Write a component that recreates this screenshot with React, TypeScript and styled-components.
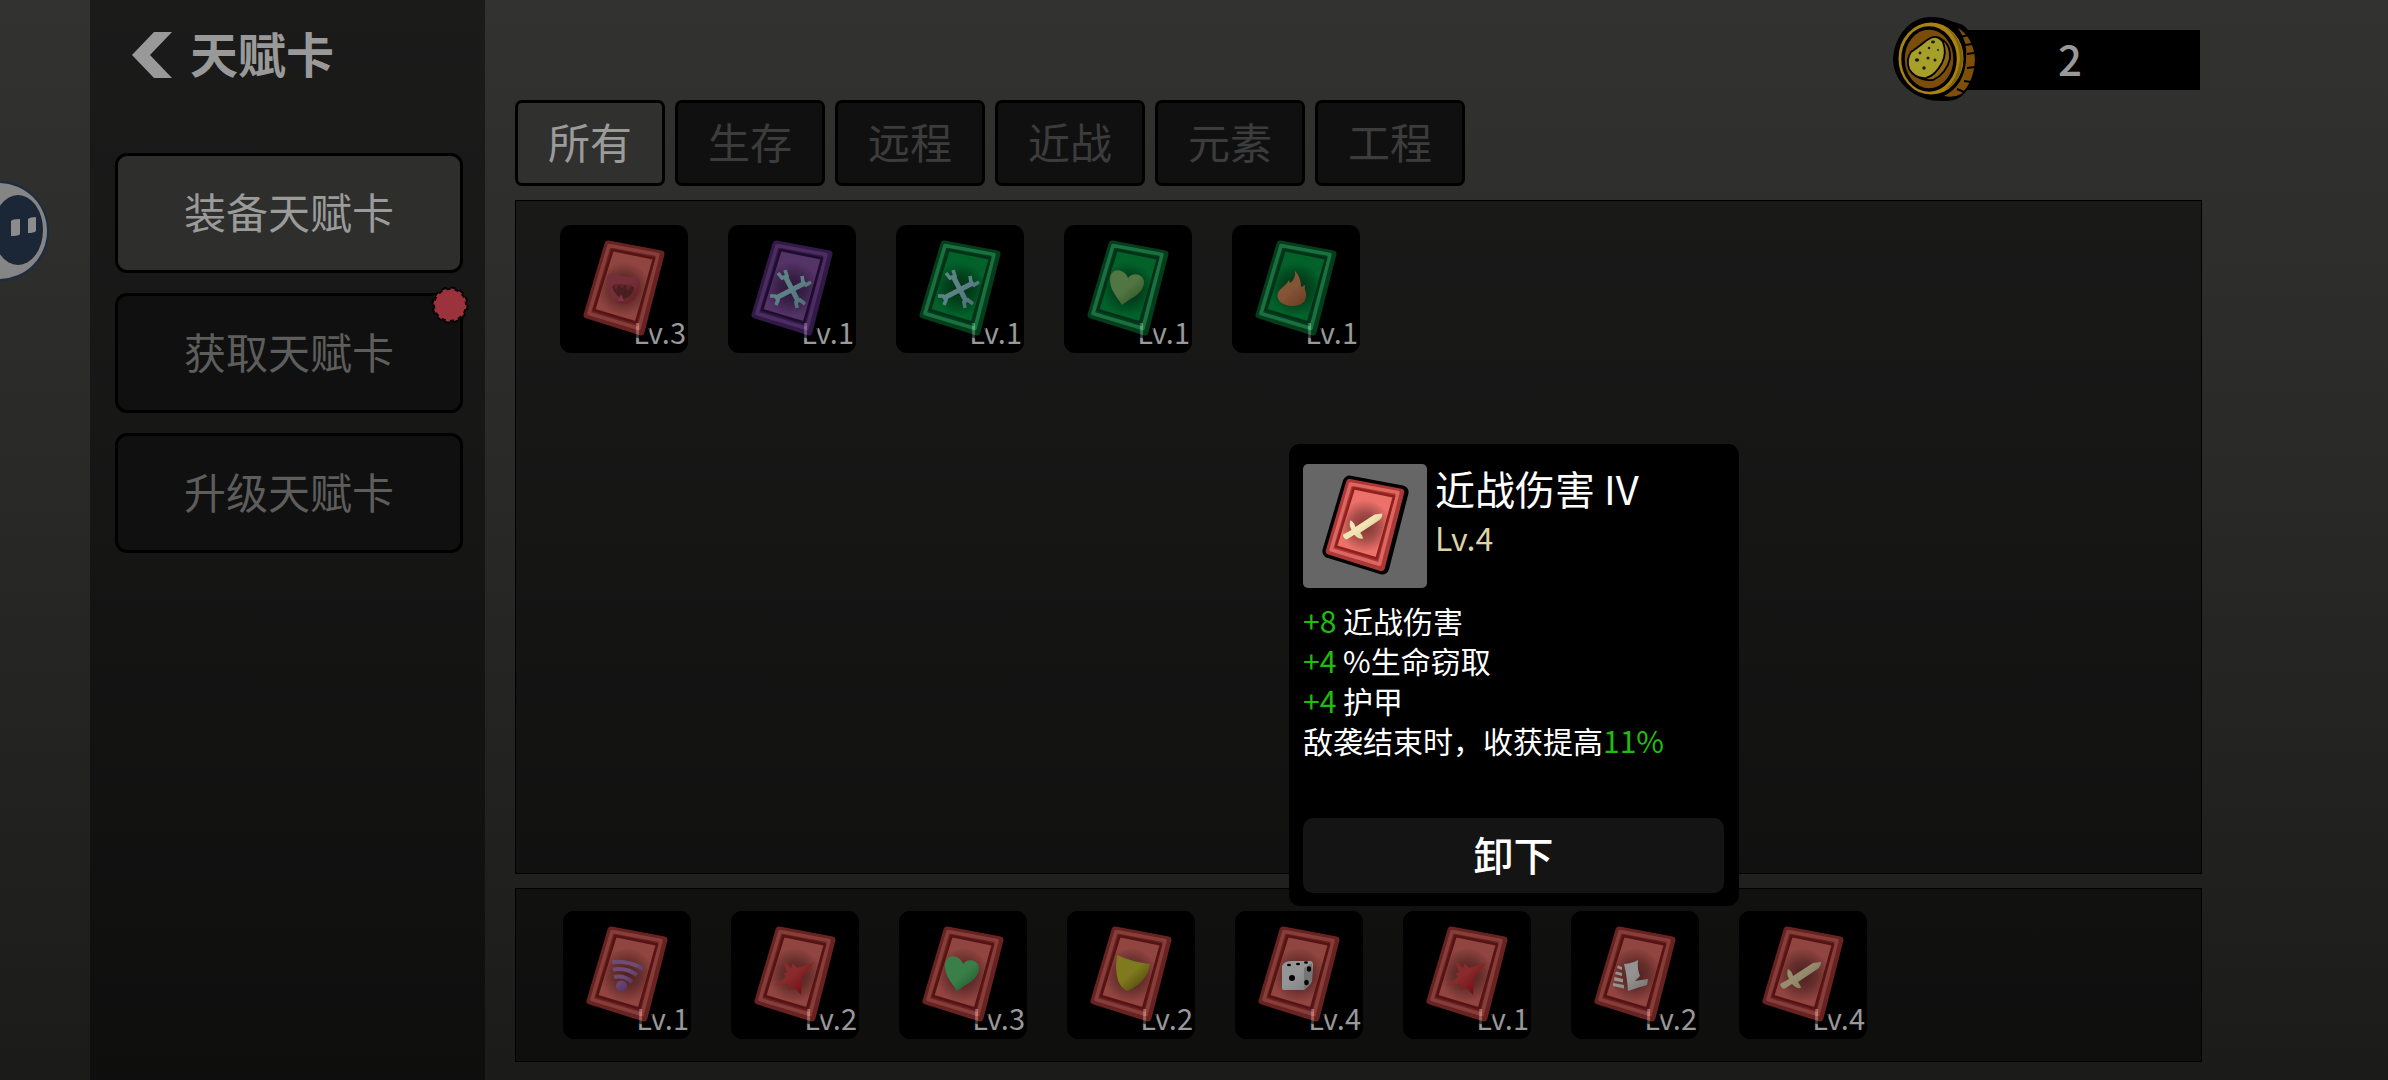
import React, { useId, useState } from "react";
import styled, { createGlobalStyle } from "styled-components";

const GlobalStyle = createGlobalStyle`
  * { box-sizing: border-box; }
  body {
    margin: 0;
    background: #1c1c1b;
    color: #999999;
    font-family: "Noto Sans CJK SC", "Noto Sans", sans-serif;
  }
  button { font: inherit; color: inherit; cursor: pointer; }
`;

const Page = styled.div`
  position: relative;
  display: flex;
  min-height: 100vh;
  padding: 0 186px 0 90px;
  overflow: hidden;
  background: linear-gradient(#323231, #2a2a29 40%, #1b1b1a);
`;

const FloatingHelper = styled.button`
  position: absolute;
  left: 0;
  top: 180px;
  width: 50px;
  height: 102px;
  padding: 0;
  border: 0;
  background: none;
`;

const Sidebar = styled.aside`
  flex: 0 0 395px;
  padding: 20px 22px 0 25px;
  background: rgba(0, 0, 0, 0.45);
`;

const BackButton = styled.button`
  display: flex;
  align-items: center;
  gap: 18px;
  height: 70px;
  margin: 0 0 63px;
  padding: 0 17px;
  border: 0;
  background: none;
`;

const Title = styled.h1`
  margin: 0;
  padding-bottom: 6px;
  font-size: 48px;
  line-height: 64px;
  font-weight: 700;
`;

const Nav = styled.nav`
  display: flex;
  flex-direction: column;
  gap: 20px;
`;

const NavButton = styled.button<{ $active: boolean }>`
  position: relative;
  height: 120px;
  padding: 0 0 4px;
  border: 3px solid #000;
  border-radius: 12px;
  background: ${(p) => (p.$active ? "#2e2e2d" : "#101010")};
  color: ${(p) => (p.$active ? "#9b9b9b" : "#5d5d5c")};
  font-size: 42px;
  line-height: 60px;
`;

const NoticeDot = styled.svg`
  position: absolute;
  top: -11px;
  right: -10px;
  width: 40px;
  height: 40px;
`;

const Main = styled.main`
  display: flex;
  flex: 1;
  flex-direction: column;
  min-width: 0;
  padding: 17px 0 18px 30px;
`;

const Header = styled.header`
  display: flex;
  justify-content: flex-end;
  height: 83px;
`;

const Currency = styled.div`
  display: flex;
  align-items: flex-start;
`;

const CoinHolder = styled.div`
  z-index: 1;
  display: flex;
  margin-right: -36px;
`;

const Amount = styled.output`
  width: 260px;
  height: 60px;
  margin: 13px 2px 0 0;
  background: #000;
  font-size: 42px;
  line-height: 56px;
  font-weight: 500;
  text-align: center;
`;

const Tabs = styled.div`
  display: flex;
  gap: 10px;
  margin-bottom: 14px;
`;

const Tab = styled.button<{ $active: boolean }>`
  width: 150px;
  height: 86px;
  padding: 0 0 4px;
  border: 3px solid #000;
  border-radius: 7px;
  background: ${(p) => (p.$active ? "#30302f" : "#101010")};
  color: ${(p) => (p.$active ? "#9b9b9b" : "#3c3c3c")};
  font-size: 42px;
  line-height: 60px;
`;

const Panel = styled.section<{ $grow?: boolean }>`
  display: flex;
  flex: ${(p) => (p.$grow ? "1" : "0 0 auto")};
  align-items: flex-start;
  gap: 40px;
  padding: ${(p) => (p.$grow ? "24px 44px" : "22px 47px")};
  border: 1px solid #000;
  background: rgba(0, 0, 0, 0.45);

  & + & { margin-top: 14px; }
`;

const Slot = styled.div`
  position: relative;
`;

const Tile = styled.button`
  display: grid;
  width: 128px;
  height: 128px;
  padding: 0;
  border: 0;
  border-radius: 11px;
  background: #000;

  & > * { grid-area: 1 / 1; }
`;

const Level = styled.span`
  place-self: end;
  padding: 0 2px 2px;
  font-size: 29px;
  line-height: 40px;
`;

const Art = styled.svg<{ $dim?: boolean }>`
  display: block;
  width: 100%;
  height: 100%;
  opacity: ${(p) => (p.$dim ? 0.61 : 1)};
`;

const Popup = styled.article`
  position: absolute;
  right: 100%;
  bottom: calc(100% + 5px);
  display: flex;
  flex-direction: column;
  width: 450px;
  padding: 20px 15px 13px 14px;
  border-radius: 11px;
  background: #000;
  color: #fff;
`;

const PopupHead = styled.div`
  display: flex;
  gap: 8px;
`;

const Portrait = styled.div`
  width: 124px;
  height: 124px;
  border-radius: 5px;
  background: #666;
`;

const PopupTitle = styled.h2`
  margin: 0;
  font-size: 40px;
  line-height: 48px;
  font-weight: 400;
`;

const PopupLevel = styled.p`
  margin: 0;
  color: #ddd4a6;
  font-size: 32px;
  line-height: 50px;
`;

const Stats = styled.ul`
  margin: 12px 0 58px;
  padding: 0;
  list-style: none;
  font-size: 30px;
  line-height: 40px;
  white-space: nowrap;
`;

const Gain = styled.span`
  color: #1fbe0c;
`;

const RemoveButton = styled.button`
  height: 75px;
  padding: 0 0 4px;
  border: 0;
  border-radius: 10px;
  background: #141414;
  font-size: 40px;
  line-height: 60px;
  font-weight: 500;
`;

type Tone = "red" | "purple" | "green";
type Glyph = "fangs" | "wrench" | "heart" | "leafHeart" | "flame" | "wifi" | "burst" | "shield" | "dice" | "boot" | "sword";

const tones: Record<Tone, { edge: string; rim: string; line: string; face: string; core: string }> = {
  red: { edge: "#ab3836", rim: "#dc6660", line: "#8e1f1c", face: "#ec716a", core: "#6b2c2a" },
  purple: { edge: "#512a76", rim: "#7c4a9f", line: "#32144e", face: "#8a54a8", core: "#3b1c4e" },
  green: { edge: "#07652f", rim: "#2bb868", line: "#045126", face: "#04a045", core: "#04401c" },
};

function GlyphArt({ name, id }: { name: Glyph; id: string }) {
  const fill = `url(#${id}g)`;
  switch (name) {
    case "fangs":
      return (
        <g>
          <path d="M47 53 Q49 46 56 49 Q64 53 72 52 Q81 52 80 60 Q79 72 71 77 Q62 82 56 77 Q47 70 47 53Z" fill={fill} />
          <path d="M52 61 Q60 57 74 62 Q73 71 64 74 Q55 72 52 61Z" fill="#5c2a28" opacity="0.7" />
          <path d="M53 59 l3 7 l3 -7 l3 5 l3 -5 l3 7 l4 -6z" fill="#a83a48" />
          <path d="M58 76 l3 -7 l3 7z" fill="#d0586a" />
        </g>
      );
    case "wrench":
      return (
        <g stroke={fill} fill="none" strokeWidth="5">
          <path d="M57 51 L70 76" />
          <path d="M77 58 L48 73" />
          <path d="M50 48 L54 53 L59 51 L57 45" strokeWidth="3.6" />
          <path d="M69 83 L68 77 L72 75 L77 79" strokeWidth="3.6" />
          <path d="M74 51 L75 57 L78 60 L83 57" strokeWidth="3.6" />
          <path d="M42 71 L47 71 L50 75 L48 80" strokeWidth="3.6" />
        </g>
      );
    case "heart":
    case "leafHeart":
      return <path d="M58 80 C53 72 46 65 46 55 C46 47 51 44 56 45.5 C61 47 63 50 64 53 C66 50 71 48 75 50 C80 52 81 57 79 62 C76 70 67 73 58 80Z" fill={fill} />;
    case "flame":
      return <path d="M63 46 C67 50 69 56 69 62 L73 60 Q72 64 74 68 C75 76 70 81 61 81 C51 81 45 76 45.500 70 C46 64 53 62 57 55 L58 58 Q64 54 63 46Z" fill={fill} />;
    case "wifi":
      return (
        <g stroke={fill} fill="none" strokeWidth="4">
          <circle cx="58.500" cy="75" r="5.500" fill={fill} stroke="none" />
          <path d="M51 66 Q61 64 69 71" />
          <path d="M50 58.500 Q63 56 74 64" />
          <path d="M49 51 Q66 49 80 58" />
        </g>
      );
    case "burst":
      return <path d="M51 48 L60 57 L62 52 L66 57 L83 52 L73 64 L71 67 L70 84 L62 75 L58 80 L57 73 L44 74 L55 66 L53 63 L56 61Z" fill={fill} />;
    case "shield":
      return <path d="M50 44 Q65 51 83 53 Q80 72 60 80 Q46 73 50 44Z" fill={fill} />;
    case "dice":
      return (
        <g>
          <path d="M47 55 Q49 50 57 50 L75 50 Q78 50 78 54 L77 70 Q76 73 69 79 L49 79 Q47 79 47 77Z" fill={fill} />
          <path d="M69 57 L77 52 L77 70 L69 78Z" fill="#c0c0c0" />
          <g fill="#000">
            <circle cx="57" cy="67" r="3" />
            <ellipse cx="74" cy="58" rx="2.200" ry="2.700" />
            <ellipse cx="71.500" cy="71.500" rx="2.200" ry="2.700" />
            <ellipse cx="54" cy="54" rx="2" ry="1.200" />
            <ellipse cx="63" cy="53" rx="2" ry="1.200" />
            <ellipse cx="71" cy="51.500" rx="2" ry="1.200" />
          </g>
        </g>
      );
    case "boot":
      return (
        <g fill={fill}>
          <path d="M53 53 Q62 52 67 49 Q66 58 69 65 L64 70 L77 68 L76 74 Q68 76 57 80 Q56 65 53 53Z" />
          <path d="M47 54.500 L51 56 V59 L46 57Z M45 60.500 L51 62 V65 L44 63Z M43.500 66 L52 68 V71.500 L43 69.500Z M42 72 L53 74 V77.500 L42 75Z" />
        </g>
      );
    case "sword":
      return <path d="M82 51 Q82 56 77 59 L59 71 Q62 75 62 77 Q57 78 53 73 L45 78 Q42 77 41 73 L50 68 Q47 62 49 58 Q53 60 54 65 L74 52Z" fill={fill} />;
  }
}

const glyphColours: Record<Glyph, [string, string]> = {
  fangs: ["#bf4e5c", "#a03440"],
  wrench: ["#98d4dc", "#82b8c4"],
  heart: ["#60d078", "#359a4c"],
  leafHeart: ["#86c070", "#4f8a3a"],
  flame: ["#d68a58", "#b45f38"],
  wifi: ["#b47cc0", "#7044a0"],
  burst: ["#e0464a", "#c0161e"],
  shield: ["#d2c834", "#837812"],
  dice: ["#f4f4f4", "#d0d0d0"],
  boot: ["#f2f0ee", "#c6c2c0"],
  sword: ["#f2e6b4", "#cdbd84"],
};

function CardArt({ tone, glyph, dim, label }: { tone: Tone; glyph: Glyph; dim?: boolean; label: string }) {
  const id = useId().replace(/[^a-zA-Z0-9]/g, "");
  const c = tones[tone];
  const [from, to] = glyphColours[glyph];
  return (
    <Art viewBox="0 0 128 128" $dim={dim} role="img" aria-label={label}>
      <defs>
        <radialGradient id={`${id}c`} gradientUnits="userSpaceOnUse" cx="64" cy="64" r="27">
          <stop offset="0" stopColor={c.core} stopOpacity="0.85" />
          <stop offset="0.5" stopColor={c.core} stopOpacity="0.55" />
          <stop offset="1" stopColor={c.core} stopOpacity="0" />
        </radialGradient>
        <linearGradient id={`${id}g`} gradientUnits="userSpaceOnUse" x1="52" y1="50" x2="76" y2="78">
          <stop offset="0" stopColor={from} />
          <stop offset="0.45" stopColor={from} />
          <stop offset="1" stopColor={to} />
        </linearGradient>
      </defs>
      <g strokeLinejoin="round">
        <path d="M48 19 L102 29 L82 107 L27 90Z" fill="#000" stroke="#000" strokeWidth="14" />
        <path d="M48 19 L101 29 L81 107 L27 90Z" fill={c.edge} stroke={c.edge} strokeWidth="7" />
        <path d="M49 20.500 L98 29.500 L79 103.500 L29 88.500Z" fill={c.edge} stroke={c.rim} strokeWidth="3.600" />
        <path d="M52.500 25 L94 33.500 L76 97.500 L34 85Z" fill={c.face} stroke={c.line} strokeWidth="2.600" />
        <path d="M54 27 L92 35 L75 95 L36 84Z" fill={`url(#${id}c)`} />
      </g>
      <GlyphArt name={glyph} id={id} />
    </Art>
  );
}

function Coin() {
  return (
    <svg width="83" height="84" viewBox="0 0 83 84" aria-hidden="true">
      <path d="M37 0 Q49 0 55 3 L70 8 Q83 18 83 42 Q82 66 70 78 Q62 85 49 84 Q30 84 17 74 Q0 61 0 41 Q2 20 16 8 Q26 0 37 0Z" fill="#000" />
      <path d="M65 11 Q80 20 82 42 Q81 65 68 77 Q61 81 51 79 Q72 68 73 42 Q75 25 65 11Z" fill="#7e4f08" />
      <path d="M68 20 L75 18 M72 28 L79 27 M74 37 L81 36 M74 51 L82 50 M71 64 L78 65 M64 72 L71 75" stroke="#000" strokeWidth="2" />
      <ellipse cx="38" cy="41.500" rx="33.500" ry="37" fill="#a8830f" stroke="#000" strokeWidth="2" />
      <path d="M48 7 Q66 18 67 42 Q65 62 52 73 Q69 64 70 42 Q69 18 48 7Z" fill="#7e6208" />
      <ellipse cx="36" cy="42" rx="26" ry="31" fill="#7a4d0b" stroke="#000" strokeWidth="3.500" />
      <path d="M48 22 Q58 27 57 42 Q53 57 40 63 Q30 64 24 59 L46 42Z" fill="#8b650f" stroke="#000" strokeWidth="1.800" />
      <path d="M34 23 Q44 16 50 25 Q54 36 49 46 Q42 59 33 61 Q22 62 16 52 Q13 42 18 35 Q24 31 34 23Z" fill="#a6a02b" stroke="#000" strokeWidth="1.800" />
      <g fill="#1c1c05">
        <ellipse cx="40" cy="25" rx="2" ry="1.400" />
        <circle cx="36" cy="31" r="1.300" />
        <circle cx="27" cy="36" r="1.400" />
        <circle cx="45" cy="33" r="1" />
        <circle cx="35" cy="41" r="1.500" />
        <ellipse cx="24" cy="43" rx="2.200" ry="1.700" />
        <circle cx="42" cy="43" r="1.500" />
        <circle cx="31" cy="51" r="1.700" />
      </g>
    </svg>
  );
}

function HelperFace() {
  return (
    <svg width="50" height="102" viewBox="0 0 50 102" aria-hidden="true">
      <circle cx="-1" cy="51" r="50" fill="#1d2c42" />
      <circle cx="-1" cy="51" r="48" fill="#858585" />
      <ellipse cx="18" cy="50" rx="25" ry="35" fill="#1b2637" />
      <path d="M11 41 Q12 39 20 39 V54 Q19 56 11 56Z M28 39 Q30 37 36 37 V51 Q34 53 28 53Z" fill="#8c8c8c" />
    </svg>
  );
}

function Notice() {
  return (
    <NoticeDot viewBox="0 0 40 40" aria-hidden="true">
      <circle cx="20" cy="20" r="17" fill="#080304" />
      <circle cx="20" cy="20" r="17" fill="none" stroke="#080304" strokeWidth="3" strokeDasharray="5 3.900" />
      <circle cx="20" cy="20" r="15" fill="#9c323b" />
      <circle cx="20" cy="20" r="15" fill="none" stroke="#9c323b" strokeWidth="3" strokeDasharray="4 3.850" />
    </NoticeDot>
  );
}

const navItems = [
  { label: "装备天赋卡", notice: false },
  { label: "获取天赋卡", notice: true },
  { label: "升级天赋卡", notice: false },
];

const tabs = ["所有", "生存", "远程", "近战", "元素", "工程"];

type Card = { tone: Tone; glyph: Glyph; level: number; selected?: boolean };

const owned: Card[] = [
  { tone: "red", glyph: "fangs", level: 3 },
  { tone: "purple", glyph: "wrench", level: 1 },
  { tone: "green", glyph: "wrench", level: 1 },
  { tone: "green", glyph: "leafHeart", level: 1 },
  { tone: "green", glyph: "flame", level: 1 },
];

const equipped: Card[] = [
  { tone: "red", glyph: "wifi", level: 1 },
  { tone: "red", glyph: "burst", level: 2 },
  { tone: "red", glyph: "heart", level: 3 },
  { tone: "red", glyph: "shield", level: 2 },
  { tone: "red", glyph: "dice", level: 4 },
  { tone: "red", glyph: "burst", level: 1 },
  { tone: "red", glyph: "boot", level: 2 },
  { tone: "red", glyph: "sword", level: 4, selected: true },
];

function CardTile({ card }: { card: Card }) {
  return (
    <Tile type="button">
      <CardArt tone={card.tone} glyph={card.glyph} dim label={card.glyph} />
      <Level>Lv.{card.level}</Level>
    </Tile>
  );
}

function CardPopup() {
  return (
    <Popup>
      <PopupHead>
        <Portrait>
          <CardArt tone="red" glyph="sword" label="sword" />
        </Portrait>
        <div>
          <PopupTitle>近战伤害 IV</PopupTitle>
          <PopupLevel>Lv.4</PopupLevel>
        </div>
      </PopupHead>
      <Stats>
        <li><Gain>+8</Gain> 近战伤害</li>
        <li><Gain>+4</Gain> %生命窃取</li>
        <li><Gain>+4</Gain> 护甲</li>
        <li>敌袭结束时，收获提高<Gain>11%</Gain></li>
      </Stats>
      <RemoveButton type="button">卸下</RemoveButton>
    </Popup>
  );
}

export default function App() {
  const [page, setPage] = useState(0);
  const [tab, setTab] = useState(0);
  return (
    <>
      <GlobalStyle />
      <Page>
        <FloatingHelper type="button" aria-label="helper">
          <HelperFace />
        </FloatingHelper>
        <Sidebar>
          <BackButton type="button">
            <svg width="40" height="46" viewBox="0 0 40 46" aria-hidden="true">
              <path d="M0 23 L22 0 H40 L18 23 L40 46 H22Z" fill="#999999" />
            </svg>
            <Title>天赋卡</Title>
          </BackButton>
          <Nav>
            {navItems.map((item, i) => (
              <NavButton key={item.label} type="button" $active={i === page} onClick={() => setPage(i)}>
                {item.label}
                {item.notice && <Notice />}
              </NavButton>
            ))}
          </Nav>
        </Sidebar>
        <Main>
          <Header>
            <Currency>
              <CoinHolder><Coin /></CoinHolder>
              <Amount>2</Amount>
            </Currency>
          </Header>
          <Tabs>
            {tabs.map((label, i) => (
              <Tab key={label} type="button" $active={i === tab} onClick={() => setTab(i)}>
                {label}
              </Tab>
            ))}
          </Tabs>
          <Panel $grow>
            {owned.map((card, i) => (
              <Slot key={i}><CardTile card={card} /></Slot>
            ))}
          </Panel>
          <Panel>
            {equipped.map((card, i) => (
              <Slot key={i}>
                <CardTile card={card} />
                {card.selected && <CardPopup />}
              </Slot>
            ))}
          </Panel>
        </Main>
      </Page>
    </>
  );
}
